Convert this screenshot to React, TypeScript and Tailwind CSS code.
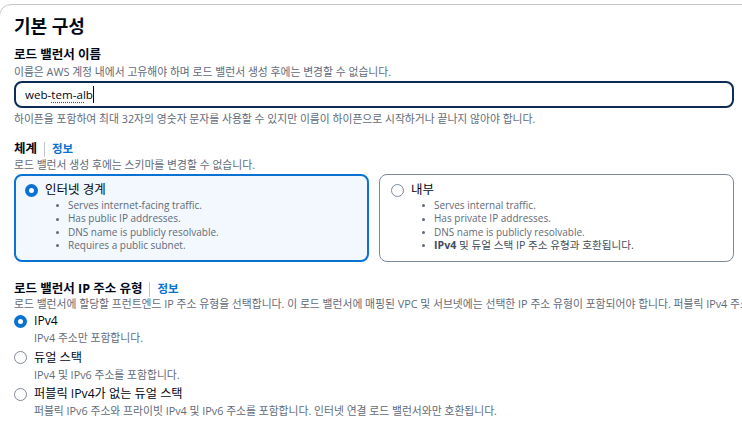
import React from 'react';

const FONT = { fontFamily: '"Open Sans", "Noto Sans CJK KR", sans-serif' };

function Radio({ checked }: { checked: boolean }) {
  return checked ? (
    <span className="inline-block w-[13px] h-[13px] rounded-full border-[4px] border-[#0972d3] bg-white shrink-0" />
  ) : (
    <span className="inline-block w-[13px] h-[13px] rounded-full border-[1.5px] border-[#7d8998] bg-white shrink-0" />
  );
}

function Label({ text, info }: { text: string; info?: boolean }) {
  return (
    <div className="flex items-center text-[12.5px] leading-[18px] font-bold text-[#000716]">
      <span>{text}</span>
      {info && (
        <>
          <span className="mx-[7px] w-px h-[15px] bg-[#c6c6cd]" />
          <span className="text-[11.5px] text-[#0972d3]">정보</span>
        </>
      )}
    </div>
  );
}

function Tile({
  checked,
  title,
  bullets,
}: {
  checked: boolean;
  title: string;
  bullets: React.ReactNode[];
}) {
  return (
    <div
      className={
        checked
          ? 'w-[355px] h-[88px] rounded-[8px] border-2 border-[#0972d3] bg-[#f2f8fd] pl-[9px] pt-[5px]'
          : 'w-[355px] h-[88px] rounded-[8px] border border-[#7d8998] bg-white pl-[11px] pt-[6px]'
      }
    >
      <div className="flex items-center gap-[7px] text-[12.5px] leading-[18px] text-[#000716]">
        <Radio checked={checked} />
        <span>{title}</span>
      </div>
      <ul className="mt-[0px] pl-[31px] text-[10px] leading-[13.4px] text-[#5f6b7a]">
        {bullets.map((b, i) => (
          <li key={i} className="flex items-center">
            <span className="w-[3px] h-[3px] rounded-full bg-[#5f6b7a] mr-[9px] shrink-0" />
            <span>{b}</span>
          </li>
        ))}
      </ul>
    </div>
  );
}

function Option({ checked, title, desc }: { checked: boolean; title: string; desc: string }) {
  return (
    <div>
      <div className="flex items-center gap-[7px] text-[12.2px] leading-[18px] text-[#000716]">
        <Radio checked={checked} />
        <span>{title}</span>
      </div>
      <div className="pl-[20px] text-[10.8px] leading-[16px] text-[#5f6b7a]">{desc}</div>
    </div>
  );
}

export default function App() {
  return (
    <div className="w-[742px] h-[429px] overflow-hidden bg-white" style={FONT}>
      <div className="ml-[-1px] mt-[4px] w-[1200px] h-[600px] rounded-[12px] border border-[#c6c6cd] px-[14px] pt-[9px]">
        <h2 className="text-[18px] leading-[24px] font-semibold text-[#000716]">기본 구성</h2>

        <div className="mt-[8px]">
          <Label text="로드 밸런서 이름" />
          <div className="text-[10.8px] leading-[16px] text-[#5f6b7a]">
            이름은 AWS 계정 내에서 고유해야 하며 로드 밸런서 생성 후에는 변경할 수 없습니다.
          </div>
          <div className="mt-[1px] w-[720px] h-[27px] rounded-[8px] border-2 border-[#0d2c55] flex items-center pl-[9px] text-[11.6px] text-[#000716]">
            <span>web-</span>
            <span className="underline decoration-dotted decoration-[#d91515] underline-offset-[3px]">tem-al</span>
            <span>b</span>
            <span className="w-px h-[17px] bg-[#000716]" />
          </div>
          <div className="mt-[3px] text-[10.8px] leading-[16px] text-[#5f6b7a]">
            하이픈을 포함하여 최대 32자의 영숫자 문자를 사용할 수 있지만 이름이 하이픈으로 시작하거나 끝나지 않아야 합니다.
          </div>
        </div>

        <div className="mt-[13px]">
          <Label text="체계" info />
          <div className="mt-[-1px] text-[10.8px] leading-[16px] text-[#5f6b7a]">
            로드 밸런서 생성 후에는 스키마를 변경할 수 없습니다.
          </div>
          <div className="mt-[1px] flex gap-[10px]">
            <Tile
              checked
              title="인터넷 경계"
              bullets={[
                'Serves internet-facing traffic.',
                'Has public IP addresses.',
                'DNS name is publicly resolvable.',
                'Requires a public subnet.',
              ]}
            />
            <Tile
              checked={false}
              title="내부"
              bullets={[
                'Serves internal traffic.',
                'Has private IP addresses.',
                'DNS name is publicly resolvable.',
                <span className="text-[10.6px] text-[#414d5c]">
                  <b>IPv4</b> 및 듀얼 스택 IP 주소 유형과 호환됩니다.
                </span>,
              ]}
            />
          </div>
        </div>

        <div className="mt-[18px]">
          <Label text="로드 밸런서 IP 주소 유형" info />
          <div className="mt-[-2px] whitespace-nowrap text-[10.8px] leading-[16px] text-[#5f6b7a]">
            로드 밸런서에 할당할 프런트엔드 IP 주소 유형을 선택합니다. 이 로드 밸런서에 매핑된 VPC 및 서브넷에는 선택한 IP 주소 유형이 포함되어야 합니다. 퍼블릭 IPv4 주소를 사용하지 않으려면 퍼블릭 IPv4가 없는 듀얼 스택을 선택합니다.
          </div>
          <div className="mt-[0px] flex flex-col gap-[2.5px]">
            <Option checked title="IPv4" desc="IPv4 주소만 포함합니다." />
            <Option checked={false} title="듀얼 스택" desc="IPv4 및 IPv6 주소를 포함합니다." />
            <Option
              checked={false}
              title="퍼블릭 IPv4가 없는 듀얼 스택"
              desc="퍼블릭 IPv6 주소와 프라이빗 IPv4 및 IPv6 주소를 포함합니다. 인터넷 연결 로드 밸런서와만 호환됩니다."
            />
          </div>
        </div>
      </div>
    </div>
  );
}
